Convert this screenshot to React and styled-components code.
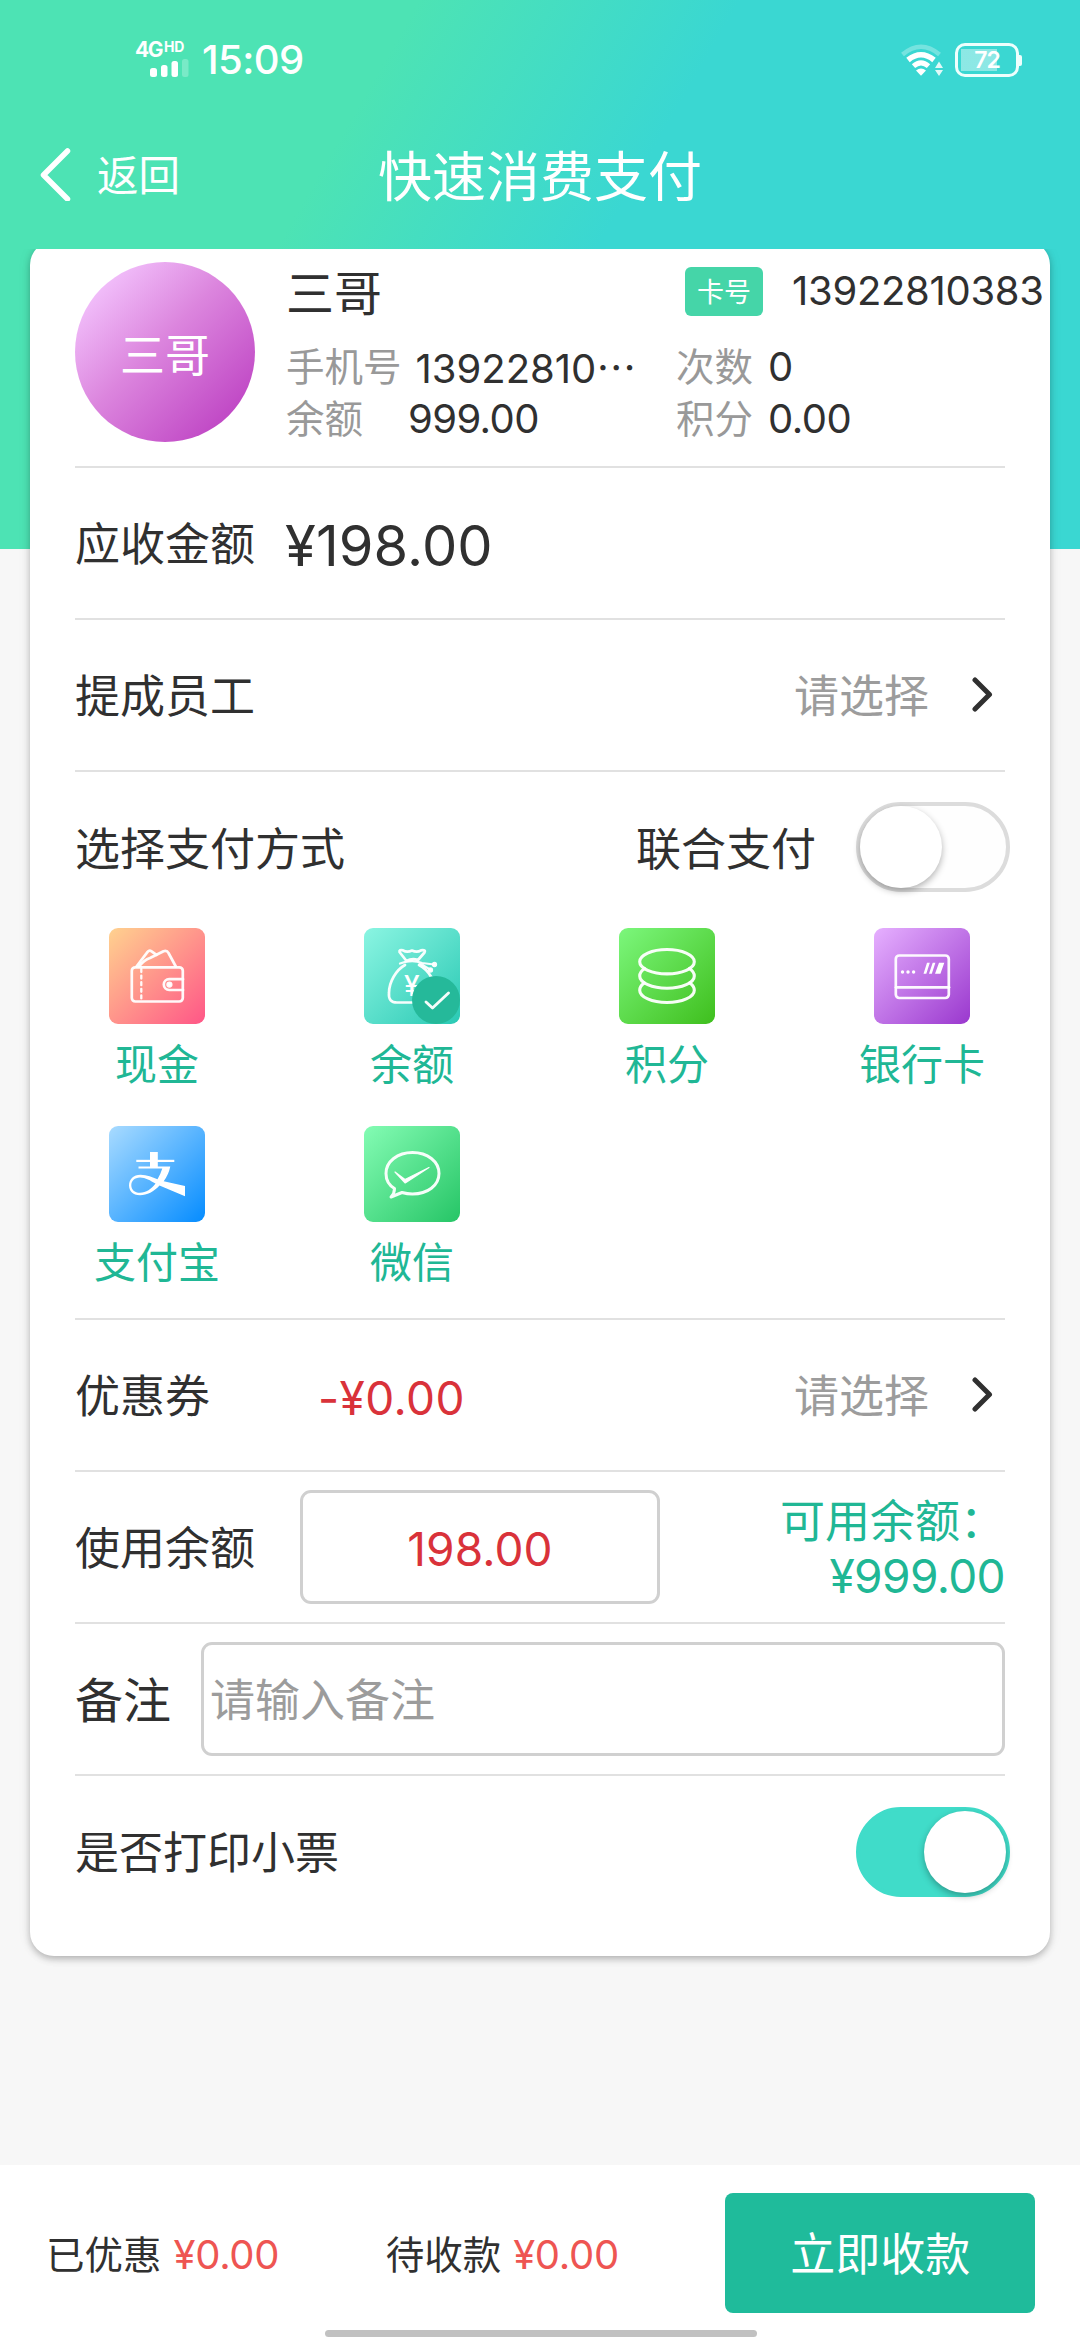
import React, { useState } from "react";
import styled, { createGlobalStyle } from "styled-components";

const GlobalStyle = createGlobalStyle`
  * { box-sizing: border-box; }
  body {
    margin: 0;
    background: #f7f7f7;
    color: #303030;
    font-family: Inter, "Noto Sans CJK SC", sans-serif;
  }
  button, input { font: inherit; }
`;

const Page = styled.div`
  display: flex;
  flex-direction: column;
  width: 1080px;
  height: 2340px;
  overflow: hidden;
  background: linear-gradient(120deg, #4de3b4 30%, #3ad7d2 53%) no-repeat 0 0 / 1080px 549px #f7f7f7;
`;

/* ---------- status bar ---------- */

const StatusBar = styled.div`
  display: flex;
  align-items: flex-start;
  height: 104px;
  padding: 41px 58px 0 135px;
  color: #fff;
`;

const Network = styled.div`
  display: flex;
  flex-direction: column;
  width: 67px;
`;

const NetworkType = styled.div`
  display: flex;
  height: 17px;
  font-size: 21px;
  font-weight: 700;
  line-height: 17px;
  letter-spacing: -1.5px;
`;

const NetworkSup = styled.span`
  margin-left: 2px;
  font-size: 14px;
  line-height: 11px;
  letter-spacing: -0.2px;
`;

const Clock = styled.div`
  flex: 1;
  margin-top: -1px;
  font-size: 40px;
  font-weight: 500;
  line-height: 40px;
  letter-spacing: -0.6px;
`;

const StatusIcons = styled.div`
  display: flex;
  gap: 11px;
`;

const Battery = styled.div`
  display: flex;
  align-items: center;
  margin-top: 2px;
`;

const BatteryBody = styled.div`
  display: flex;
  align-items: center;
  justify-content: center;
  width: 64px;
  height: 34px;
  border: 3px solid #eefffd;
  border-radius: 10px;
  background: linear-gradient(90deg, rgba(255, 255, 255, 0.42) 70%, transparent 70%) no-repeat center / 52px 22px;
  font-size: 23px;
  font-weight: 600;
  line-height: 28px;
  letter-spacing: -1px;
`;

const BatteryTip = styled.div`
  width: 3px;
  height: 11px;
  border-radius: 0 2px 2px 0;
  background: #eefffd;
`;

/* ---------- navigation bar ---------- */

const NavBar = styled.header`
  display: grid;
  grid-template-columns: 1fr auto 1fr;
  align-items: center;
  height: 145px;
  padding: 0 40px;
  color: #fff;
`;

const BackButton = styled.button`
  display: flex;
  align-items: center;
  gap: 26px;
  height: 60px;
  margin-top: -5px;
  padding: 0;
  border: 0;
  background: none;
  color: inherit;
  font-size: 41.5px;
  line-height: 60px;
`;

const BackText = styled.span`
  padding-top: 3px;
`;

const Title = styled.h1`
  margin: 2px 0 0;
  font-size: 54px;
  font-weight: 400;
  line-height: 72px;
`;

/* ---------- card ---------- */

const Content = styled.main`
  flex: 1;
  overflow: hidden;
  padding: 0 30px;
`;

const Card = styled.section`
  height: 1715px;
  margin-top: -8px;
  padding: 0 45px;
  border-radius: 24px;
  background: #fff;
  box-shadow: 0 3px 7px rgba(0, 0, 0, 0.26), 0 0 16px rgba(0, 0, 0, 0.05);
`;

const Profile = styled.div`
  display: flex;
  height: 227px;
  padding-top: 21px;
  border-bottom: 2px solid #e1e1e1;
  white-space: nowrap;
`;

const Avatar = styled.div`
  flex: none;
  width: 180px;
  height: 180px;
  border-radius: 50%;
  background: linear-gradient(135deg, #f5c8ff 8%, #dc86de 45%, #c14ac6 85%);
  color: #fff;
  font-size: 45px;
  line-height: 187px;
  text-align: center;
`;

const ProfileInfo = styled.div`
  display: grid;
  grid-template-columns: 390px auto;
  grid-template-rows: 79px 52px 52px;
  margin-left: 31px;
`;

const Name = styled.div`
  font-size: 48px;
  line-height: 64px;
`;

const CardNumber = styled.div`
  display: flex;
  align-items: flex-start;
  padding: 5px 0 0 9px;
`;

const CardTag = styled.span`
  width: 78px;
  height: 49px;
  margin-right: 29px;
  border-radius: 6px;
  background: #45d5a8;
  color: #fff;
  font-size: 27px;
  line-height: 52px;
  text-align: center;
`;

const Digits = styled.span`
  font-size: ${(p) => p.$size || 40}px;
  letter-spacing: ${(p) => p.$spacing || "-0.3px"};
  color: ${(p) => p.$color || "inherit"};
`;

const CardDigits = styled(Digits)`
  line-height: 47px;
`;

const Stat = styled.div`
  display: flex;
  align-items: center;
  gap: ${(p) => p.$gap || 15}px;
  line-height: 54px;
`;

const StatLabel = styled.span`
  color: #999;
  font-size: 38.5px;
`;

const Ellipsis = styled.span`
  font-family: "Noto Sans CJK SC", sans-serif;
`;

const Row = styled.div`
  display: flex;
  align-items: center;
  height: 152px;
  border-bottom: ${(p) => (p.$last ? "0" : "2px solid #e1e1e1")};
  font-size: 45px;
  line-height: 60px;
`;

const Label = styled.span`
  flex: none;
  width: ${(p) => (p.$width ? `${p.$width}px` : "auto")};
  padding-top: ${(p) => (p.$size === 44 ? 2 : 4)}px;
  font-size: ${(p) => p.$size || 45}px;
`;

const RowAmount = styled(Digits)`
  padding-top: 5px;
`;

const Spacer = styled.div`
  flex: 1;
`;

const Placeholder = styled.span`
  margin-right: 41px;
  padding-top: 4px;
  color: #9c9c9c;
`;

const AmountBox = styled.div`
  width: 360px;
  height: 114px;
  border: 3px solid #d0d0d0;
  border-radius: 11px;
  line-height: 112px;
  text-align: center;
`;

const Available = styled.div`
  flex: 1;
  padding-top: 4px;
  color: #20b795;
  line-height: 54px;
  text-align: right;
  white-space: nowrap;
`;

const RemarkInput = styled.input`
  flex: 1;
  height: 114px;
  padding: 3px 6px 0;
  border: 3px solid #d0d0d0;
  border-radius: 11px;
  outline: 0;
  background: #fff;
  color: #303030;
  &::placeholder { color: #9c9c9c; opacity: 1; }
`;

/* ---------- switch ---------- */

const Track = styled.button`
  display: flex;
  flex: none;
  align-items: center;
  justify-content: ${(p) => (p.$on ? "flex-end" : "flex-start")};
  width: 154px;
  height: 90px;
  margin-right: -5px;
  padding: 0;
  border: 4px solid ${(p) => (p.$on ? "#40dcc9" : "#dcdcdc")};
  border-radius: 45px;
  background: ${(p) => (p.$on ? "#40dcc9" : "#fefefe")};
`;

const Knob = styled.span`
  width: 82px;
  height: 82px;
  border-radius: 50%;
  background: #fff;
  box-shadow: 0 3px 7px rgba(0, 0, 0, 0.3);
`;

function Switch({ on, onChange }) {
  return (
    <Track type="button" role="switch" aria-checked={on} $on={on} onClick={() => onChange(!on)}>
      <Knob />
    </Track>
  );
}

/* ---------- payment methods ---------- */

const Payment = styled.div`
  height: 548px;
  border-bottom: 2px solid #e1e1e1;
`;

const PaymentHead = styled.div`
  display: flex;
  align-items: center;
  height: 150px;
  font-size: 45px;
  line-height: 60px;
`;

const HeadLabel = styled.span`
  padding-top: 5px;
`;

const JointLabel = styled(HeadLabel)`
  margin: 0 40px 0 auto;
`;

const Methods = styled.div`
  display: grid;
  grid-template-columns: repeat(4, 255px);
  row-gap: 31px;
  margin: 6px -45px 0 -45.500px;
`;

const Method = styled.div`
  display: flex;
  flex-direction: column;
  align-items: center;
  gap: 11px;
  height: 167px;
`;

const MethodIcon = styled.div`
  flex: none;
  width: 96px;
  height: 96px;
  overflow: hidden;
  border-radius: 9px;
  background: linear-gradient(135deg, ${(p) => p.$from}, ${(p) => p.$to});
`;

const MethodName = styled.span`
  color: #20b795;
  font-size: 42px;
  line-height: 60px;
`;

/* ---------- footer ---------- */

const Footer = styled.footer`
  display: flex;
  flex-direction: column;
  height: 175px;
  background: #fff;
`;

const FooterRow = styled.div`
  display: flex;
  align-items: center;
  height: 148px;
  margin-top: 14px;
  padding: 0 45px 0 46px;
`;

const Total = styled.div`
  display: flex;
  align-items: center;
  gap: 12px;
  width: 340px;
  padding-top: 4px;
  font-size: 38.5px;
  line-height: 52px;
`;

const PayButton = styled.button`
  width: 310px;
  height: 120px;
  margin: 0 0 0 auto;
  padding: 4px 0 0;
  border: 0;
  border-radius: 8px;
  background: #1fbb9b;
  color: #fff;
  font-size: 45px;
  line-height: 116px;
`;

const HomeIndicator = styled.div`
  flex: none;
  width: 432px;
  height: 7px;
  margin: 3px 0 0 325px;
  border-radius: 4px;
  background: #c1c1c1;
`;

/* ---------- drawings ---------- */

const SignalBars = () => (
  <svg width="56" height="20" viewBox="0 0 56 20">
    <rect x="15" y="10" width="7" height="9" rx="2.5" fill="#fff" />
    <rect x="26" y="7" width="6.5" height="12" rx="2.5" fill="#fff" />
    <rect x="36.5" y="3" width="6.5" height="16" rx="2.5" fill="#fff" />
    <rect x="47" y="1" width="6.5" height="18" rx="2.5" fill="#fff" opacity=".25" />
  </svg>
);

const Wifi = () => (
  <svg width="43" height="36" viewBox="0 0 43 36">
    <g fill="none" stroke="#fff">
      <path d="M1.5 13.5Q20 -2 38.500 13.500" strokeWidth="4.500" opacity=".3" />
      <path d="M7 19Q20 8.500 33 19" strokeWidth="5.500" />
      <path d="M12.500 25.200Q20 18.500 27.500 25.200" strokeWidth="5" />
    </g>
    <path d="M15 29.500Q20 25.500 25 29.500L20 34.800Z" fill="#fff" />
    <path d="M34 27L38 20.500L42 27ZM34 29L38 35L42 29Z" fill="#fff" opacity=".85" />
  </svg>
);

const BackArrow = () => (
  <svg width="31" height="54" viewBox="0 0 31 54">
    <path d="M27.500 4L3.500 28L27.500 52" fill="none" stroke="#fff" strokeWidth="5.500" strokeLinecap="round" strokeLinejoin="round" />
  </svg>
);

const Chevron = styled(({ className }) => (
  <svg className={className} width="35" height="36" viewBox="0 0 35 36">
    <path d="M5 3L19.500 17.500L5 32" fill="none" stroke="#303030" strokeWidth="5" strokeLinecap="round" strokeLinejoin="round" />
  </svg>
))`
  flex: none;
`;

const line = { fill: "none", stroke: "#fff", strokeOpacity: 0.95, strokeWidth: 2.7, strokeLinecap: "round", strokeLinejoin: "round" };

const WalletIcon = () => (
  <svg width="96" height="96" viewBox="0 0 96 96" {...line}>
    <rect x="22.800" y="39.300" width="51" height="34.200" rx="3.500" />
    <path d="M32.300 41V72" strokeDasharray="3 3.600" strokeWidth="2.300" />
    <path d="M74 51.200H60.200A5.400 5.400 0 0 0 60.200 62H74" />
    <circle cx="60.400" cy="56.600" r="1.800" fill="#fff" />
    <path d="M27.500 38.500L38.600 23.900Q40.300 21.800 42.600 23.300L47.500 26.800" />
    <path d="M30 38.500Q35 32 41 30L54.500 23.200Q58 22 59.500 25L66.800 38.500" />
  </svg>
);

const MoneyBagIcon = () => (
  <svg width="96" height="96" viewBox="0 0 96 96" {...line}>
    <path d="M42.500 33L35.500 24Q35 21.500 39 22.300Q43 25 48 22.500Q53 25 57 22.300Q62 21.500 60.500 24.500L54 32Q48 30 42.500 33Z" />
    <path d="M36 35.500Q48 31 58 35L70 36.500M56 35.500L66 41.500" strokeWidth="2.200" />
    <circle cx="70.500" cy="36.500" r="1.300" fill="#fff" />
    <circle cx="66.500" cy="42" r="1.300" fill="#fff" />
    <path d="M41 37C32 42 25 54 25 65Q24 74.500 33 74.500H64Q73 74 72.500 65C71.500 54 65 42 55 37" />
    <text x="47.700" y="67.500" textAnchor="middle" fontFamily="Inter, sans-serif" fontSize="28" fontWeight="500" fill="#fff" stroke="none">¥</text>
    <circle cx="72" cy="72" r="24" fill="#25b99a" stroke="none" />
    <path d="M62 74L68.500 80L84.500 65" strokeWidth="2.900" />
  </svg>
);

const CoinsIcon = () => (
  <svg width="96" height="96" viewBox="0 0 96 96" {...line} strokeWidth="3.1">
    <ellipse cx="48" cy="33.700" rx="27.300" ry="12.200" />
    <path d="M25.500 40.500C22 43 20.700 45.500 20.700 48C20.700 54.800 33 60.300 48 60.300S75.300 54.800 75.300 48C75.300 45.500 74 43 70.500 40.500" />
    <path d="M25.500 54.800C22 57.300 20.700 59.800 20.700 62.200C20.700 69 33 74.500 48 74.500S75.300 69 75.300 62.200C75.300 59.800 74 57.300 70.500 54.800" />
  </svg>
);

const BankCardIcon = () => (
  <svg width="96" height="96" viewBox="0 0 96 96" {...line}>
    <rect x="21.800" y="27.500" width="53" height="42.500" rx="3.500" />
    <path d="M22 59.300H75" />
    <g fill="#fff" stroke="none">
      <circle cx="28.500" cy="44" r="1.700" />
      <circle cx="34" cy="44" r="1.700" />
      <circle cx="39.600" cy="44" r="1.700" />
      <path d="M49.500 45.800L53 34.700H55.800L52.300 45.800ZM55 45.800L58.700 34.700H61.400L57.800 45.800ZM61 45.800L65 34.700H70.300L66.400 45.800Z" />
    </g>
  </svg>
);

const AlipayIcon = () => (
  <svg width="96" height="96" viewBox="0 0 96 96" fill="#fff">
    <rect x="41" y="26" width="7.800" height="15.500" />
    <rect x="27.300" y="33.800" width="38" height="2.200" />
    <path d="M29.500 40.600H61.300Q59.500 49 54.700 55.200L76 60V70.300L50.500 59.500C45 65.500 38 69.300 31 69.300C23.500 69.300 20 64.500 20 59.300C20 53.500 24.500 48.800 31.500 48.800C38 48.800 43.500 51.300 48.500 53.200Q51.500 48.500 53.300 42.600H29.500ZM46.500 57.500C41.500 54.500 36.500 51.400 31 51.400C25.500 51.400 22.300 55 22.300 59.200C22.300 63.500 25.500 66.800 31 66.800C37 66.800 42.500 63 46.500 57.500Z" fillRule="evenodd" />
  </svg>
);

const WechatIcon = () => (
  <svg width="96" height="96" viewBox="0 0 96 96" {...line}>
    <path d="M30.500 62.500C24.500 59 22 53.800 22 47.500C22 35.500 33.500 26.500 48.500 26.500S75 35.500 75 47.500S63.500 68 48.500 68C44.500 68 41.500 67.500 38 66.500L27 71Q30.500 67.500 30.500 62.500Z" strokeWidth="3" />
    <path d="M31 46L41 53.500L65 41.500L41.200 57Z" fill="#fff" strokeWidth="1.2" />
  </svg>
);

const methods = [
  { name: "现金", Icon: WalletIcon, from: "#ffd28f", to: "#ff5687" },
  { name: "余额", Icon: MoneyBagIcon, from: "#8bf5e2", to: "#2ac9b4" },
  { name: "积分", Icon: CoinsIcon, from: "#7cf77c", to: "#3fbf1d" },
  { name: "银行卡", Icon: BankCardIcon, from: "#e6b0ff", to: "#9a38ce" },
  { name: "支付宝", Icon: AlipayIcon, from: "#a9dbff", to: "#058cff" },
  { name: "微信", Icon: WechatIcon, from: "#84fcb4", to: "#26c566" },
];

export default function App() {
  const [joint, setJoint] = useState(false);
  const [print, setPrint] = useState(true);

  return (
    <Page lang="zh-CN">
      <GlobalStyle />
      <StatusBar>
        <Network>
          <NetworkType>4G<NetworkSup>HD</NetworkSup></NetworkType>
          <SignalBars />
        </Network>
        <Clock>15:09</Clock>
        <StatusIcons>
          <Wifi />
          <Battery>
            <BatteryBody>72</BatteryBody>
            <BatteryTip />
          </Battery>
        </StatusIcons>
      </StatusBar>

      <NavBar>
        <BackButton type="button"><BackArrow /><BackText>返回</BackText></BackButton>
        <Title>快速消费支付</Title>
      </NavBar>

      <Content>
        <Card>
          <Profile>
            <Avatar>三哥</Avatar>
            <ProfileInfo>
              <Name>三哥</Name>
              <CardNumber>
                <CardTag>卡号</CardTag>
                <CardDigits>13922810383</CardDigits>
              </CardNumber>
              <Stat $gap={14}>
                <StatLabel>手机号</StatLabel>
                <Digits $spacing="0px">13922810<Ellipsis>…</Ellipsis></Digits>
              </Stat>
              <Stat><StatLabel>次数</StatLabel><Digits>0</Digits></Stat>
              <Stat $gap={45}><StatLabel>余额</StatLabel><Digits $spacing="-0.6px">999.00</Digits></Stat>
              <Stat><StatLabel>积分</StatLabel><Digits $spacing="-0.5px">0.00</Digits></Stat>
            </ProfileInfo>
          </Profile>

          <Row>
            <Label $width={210}>应收金额</Label>
            <RowAmount $size={56} $spacing="0.1px">¥198.00</RowAmount>
          </Row>

          <Row>
            <Label>提成员工</Label>
            <Spacer />
            <Placeholder>请选择</Placeholder>
            <Chevron />
          </Row>

          <Payment>
            <PaymentHead>
              <HeadLabel>选择支付方式</HeadLabel>
              <JointLabel>联合支付</JointLabel>
              <Switch on={joint} onChange={setJoint} />
            </PaymentHead>
            <Methods>
              {methods.map(({ name, Icon, from, to }) => (
                <Method key={name}>
                  <MethodIcon $from={from} $to={to}><Icon /></MethodIcon>
                  <MethodName>{name}</MethodName>
                </Method>
              ))}
            </Methods>
          </Payment>

          <Row>
            <Label $width={243}>优惠券</Label>
            <RowAmount $size={46} $spacing="0.4px" $color="#d9323a">-¥0.00</RowAmount>
            <Spacer />
            <Placeholder>请选择</Placeholder>
            <Chevron />
          </Row>

          <Row>
            <Label $width={225}>使用余额</Label>
            <AmountBox><Digits $size={46} $spacing="0.1px" $color="#d9323a">198.00</Digits></AmountBox>
            <Available>
              可用余额：<br />
              <Digits $size={46} $spacing="-0.6px">¥999.00</Digits>
            </Available>
          </Row>

          <Row>
            <Label $width={126} $size={48}>备注</Label>
            <RemarkInput placeholder="请输入备注" />
          </Row>

          <Row $last>
            <Label $size={44}>是否打印小票</Label>
            <Spacer />
            <Switch on={print} onChange={setPrint} />
          </Row>
        </Card>
      </Content>

      <Footer>
        <FooterRow>
          <Total>已优惠<Digits $color="#ee5552">¥0.00</Digits></Total>
          <Total>待收款<Digits $color="#ee5552">¥0.00</Digits></Total>
          <PayButton type="button">立即收款</PayButton>
        </FooterRow>
        <HomeIndicator />
      </Footer>
    </Page>
  );
}
